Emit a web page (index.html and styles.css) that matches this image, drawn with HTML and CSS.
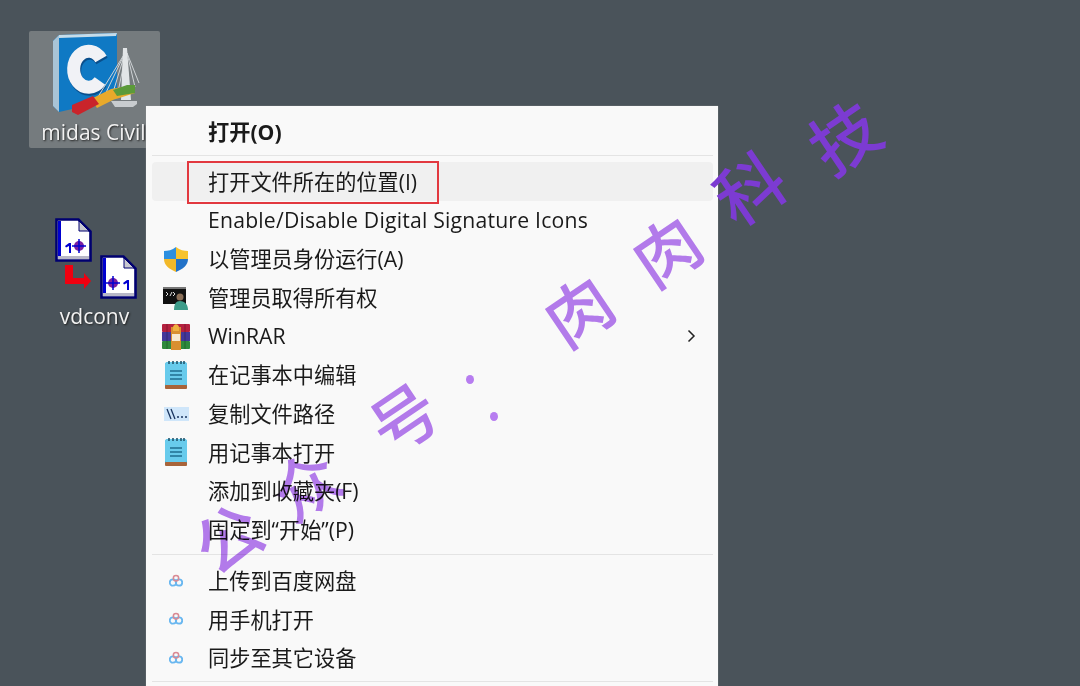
FILE: index.html
```html
<html lang="zh-CN">
  <head>
    <meta charset="UTF-8" />
    <title>Desktop menu</title>
    <link rel="stylesheet" href="styles.css">
  </head>
  <body>
    <svg class="defs" width="0" height="0">
      <symbol id="notepad" viewBox="0 0 24 30">
        <rect x="1" y="2" width="22" height="27" rx="3" fill="#2fa9d8"/>
        <rect x="1" y="2" width="22" height="24" rx="3" fill="#68cbec"/>
        <rect x="1" y="25" width="22" height="4" rx="1" fill="#a8643a"/>
        <path d="M5 1v3M9 1v3M13 1v3M17 1v3M20 1v3" stroke="#22566e" stroke-width="1.6"/>
        <path d="M6 11h12M6 15h12M6 19h12" stroke="#1f6f90" stroke-width="1.6"/>
      </symbol>
      <symbol id="cloud" viewBox="0 0 14 14">
        <circle cx="4" cy="8.500" r="3.200" fill="none" stroke="#69b7f0" stroke-width="1.800"/>
        <circle cx="10" cy="8.500" r="3.200" fill="none" stroke="#69b7f0" stroke-width="1.800"/>
        <circle cx="7" cy="4.200" r="2.700" fill="none" stroke="#d98a94" stroke-width="1.500"/>
      </symbol>
      <symbol id="doc" viewBox="0 0 37 44">
        <path d="M1.500 1.500h22l12 12v29H1.500z" fill="#fff" stroke="#000070" stroke-width="2.600"/>
        <path d="M3 3v37h3V3z" fill="#0000d0"/>
        <path d="M24 3v10h10z" fill="#c8c8d0" stroke="#000070"/>
        <rect x="3" y="38" width="31" height="3" fill="#b8b8c8"/>
      </symbol>
    </svg>

    <div class="desktop">
      <div class="desk-item desk-item-selected">
        <svg class="civil-icon" width="90" height="84" viewBox="0 0 90 84">
          <path d="M2 8 8 2 66 0V66L8 79 2 73z" fill="#0f79c4"/>
          <path d="M2 8 8 2 8 79 2 73z" fill="#a9c4d6"/>
          <path d="M8 2 66 0 65 3 8 5z" fill="#c5dcea"/>
          <path d="M51 28 A15 18 0 1 0 50 50" fill="none" stroke="#0a4f8c" stroke-width="13"/>
          <path d="M50 26 A15 18 0 1 0 49 48" fill="none" stroke="#f1f2f6" stroke-width="13"/>
          <path d="M74 20 42 72M74 20 50 70M74 20 60 66M75 20 66 64M76 20 88 50M76 20 84 54" stroke="#cfd3d6" stroke-width="1" fill="none"/>
          <path d="M72 15h4l4 52h-10z" fill="#e2e5e7"/>
          <path d="M60 68h26v3l-4 3H64z" fill="#c8cccf"/>
          <path d="M40 66 60 56 84 52 84 60 62 67 46 75z" fill="#e8a92a"/>
          <path d="M62 57 76 52 84 52 84 60 66 63z" fill="#5c9a3a"/>
          <path d="M21 72 42 63 48 71 27 82 21 79z" fill="#c9242b"/>
        </svg>
        <span class="desk-label">midas Civil</span>
      </div>

      <div class="desk-item desk-item-vd">
        <svg class="vd-icon" width="86" height="82" viewBox="0 0 86 82">
          <use href="#doc" x="1" y="0" width="37" height="44"/>
          <circle cx="25" cy="28" r="5" fill="#7a1fa0"/>
          <path d="M25 21v14M18 28h14" stroke="#0000d0" stroke-width="1.500"/>
          <path d="M11 28l4-3h2v10h-2V28l-3 1.500z" fill="#0000d0"/>
          <use href="#doc" x="46" y="37" width="37" height="44"/>
          <circle cx="59" cy="65" r="5" fill="#7a1fa0"/>
          <path d="M59 58v14M52 65h14" stroke="#0000d0" stroke-width="1.500"/>
          <path d="M69 65l4-3h2v10h-2V65l-3 1.500z" fill="#0000d0"/>
          <path d="M11 47h8v13h11v-5l7 8-7 8v-5H11z" fill="#f00010"/>
        </svg>
        <span class="desk-label">vdconv</span>
      </div>

      <div class="menu">
        <div class="row row-bold"><span class="slot"></span><span>打开(O)</span></div>
        <div class="sep"></div>

        <div class="row row-active">
          <span class="slot"></span><span>打开文件所在的位置(I)</span>
          <div class="mark"></div>
        </div>
        <div class="row"><span class="slot"></span><span class="label-latin">Enable/Disable Digital Signature Icons</span></div>
        <div class="row">
          <span class="slot">
            <svg width="26" height="26" viewBox="0 0 26 26">
              <path d="M13 1C9 4 5 5 1 5V13H13z" fill="#2d8fe0"/>
              <path d="M13 1C17 4 21 5 25 5V13H13z" fill="#f7c32e"/>
              <path d="M1 13C1 19 6 23 13 26V13z" fill="#f2b92a"/>
              <path d="M25 13C25 19 20 23 13 26V13z" fill="#2272c8"/>
            </svg>
          </span>
          <span>以管理员身份运行(A)</span>
        </div>
        <div class="row">
          <span class="slot">
            <svg width="26" height="24" viewBox="0 0 26 24">
              <rect x="0" y="1" width="23" height="17" fill="#111"/>
              <rect x="0" y="1" width="23" height="2" fill="#777"/>
              <path d="M3 6 5 8 3 10M7 10l2-4M10 6l2 2-2 2" stroke="#ddd" fill="none"/>
              <circle cx="17" cy="11" r="3.500" fill="#8a6f58"/>
              <path d="M11 24c0-6 2-9 6-9s8 3 8 9z" fill="#3d9c8a"/>
            </svg>
          </span>
          <span>管理员取得所有权</span>
        </div>
        <div class="row">
          <span class="slot">
            <svg width="28" height="27" viewBox="0 0 28 27">
              <rect x="0" y="1" width="28" height="8" rx="1" fill="#b4213f"/>
              <rect x="0" y="9" width="28" height="9" fill="#43379a"/>
              <rect x="0" y="18" width="28" height="8" rx="1" fill="#2e8a3c"/>
              <rect x="9" y="4" width="10" height="23" fill="#d98f30"/>
              <path d="M11 5c0-5 6-5 6 0v3h-6z" fill="#f0b040"/>
              <rect x="10" y="11" width="8" height="7" fill="#f6e8d0"/>
              <path d="M5 1v25M23 1v25" stroke="#00000040"/>
            </svg>
          </span>
          <span>WinRAR</span>
          <svg class="chevron" width="9" height="14" viewBox="0 0 9 14">
            <path d="M1.500 1.500 7 7l-5.500 5.500" fill="none" stroke="#222" stroke-width="1.500"/>
          </svg>
        </div>
        <div class="row">
          <span class="slot"><svg width="24" height="30"><use href="#notepad"/></svg></span>
          <span>在记事本中编辑</span>
        </div>
        <div class="row">
          <span class="slot">
            <svg width="25" height="14" viewBox="0 0 25 14">
              <rect x="0" y="0" width="25" height="14" fill="#cfe6fa"/>
              <path d="M3 2 7 12M7 2l4 10" stroke="#1a3560" stroke-width="1.300"/>
              <path d="M13 10h2M17 10h2M21 10h2" stroke="#1a3560" stroke-width="1.500"/>
            </svg>
          </span>
          <span>复制文件路径</span>
        </div>
        <div class="row">
          <span class="slot"><svg width="24" height="30"><use href="#notepad"/></svg></span>
          <span>用记事本打开</span>
        </div>
        <div class="row"><span class="slot"></span><span>添加到收藏夹(F)</span></div>
        <div class="row"><span class="slot"></span><span>固定到“开始”(P)</span></div>
        <div class="sep sep-wide"></div>

        <div class="row">
          <span class="slot"><svg width="14" height="14"><use href="#cloud"/></svg></span>
          <span>上传到百度网盘</span>
        </div>
        <div class="row">
          <span class="slot"><svg width="14" height="14"><use href="#cloud"/></svg></span>
          <span>用手机打开</span>
        </div>
        <div class="row">
          <span class="slot"><svg width="14" height="14"><use href="#cloud"/></svg></span>
          <span>同步至其它设备</span>
        </div>
        <div class="sep"></div>
      </div>

      <!-- handwritten watermark, laid over everything -->
      <div class="wm">
        <span class="wm-ch wm-1">公</span>
        <span class="wm-ch wm-2">众</span>
        <span class="wm-ch wm-3">号</span>
        <span class="wm-dot wm-dot-1"></span>
        <span class="wm-dot wm-dot-2"></span>
        <span class="wm-ch wm-4">肉</span>
        <span class="wm-ch wm-5">肉</span>
        <span class="wm-ch wm-6 wm-dark">科</span>
        <span class="wm-ch wm-7 wm-dark">技</span>
      </div>
    </div>
  </body>
</html>
```

FILE: styles.css
```css
html,
body {
  margin: 0;
  padding: 0;
}

.defs {
  position: absolute;
}

.desktop {
  position: relative;
  width: 1080px;
  height: 686px;
  overflow: hidden;
  background-color: #4a535a;
  font-family: "Open Sans", "Noto Sans CJK SC", sans-serif;
}

/* desktop icons sit on a free canvas */
.desk-item {
  position: absolute;
  display: flex;
  flex-direction: column;
  align-items: center;
  width: 131px;
}

.desk-item-selected {
  left: 29px;
  top: 31px;
  height: 117px;
  background-color: #757b7e;
  border-radius: 2px;
}

.civil-icon {
  margin-top: 2px;
  margin-left: 3px;
}

.desk-item-vd {
  left: 29px;
  top: 218px;
}

.desk-label {
  font-size: 21px;
  line-height: 28px;
  color: #f2f2f2;
  text-shadow: 1px 1px 2px #222;
  white-space: nowrap;
}

.desk-item-selected .desk-label {
  margin-top: 1px;
  margin-right: 2px;
}

.desk-item-vd .desk-label {
  margin-top: 2px;
}

.vd-icon {
  margin-left: 4px;
}

/* context menu */
.menu {
  position: absolute;
  left: 146px;
  top: 106px;
  width: 572px;
  height: 580px;
  box-sizing: border-box;
  padding: 6.4px 5px 0 6px;
  background-color: #f9f9f9;
  box-shadow: 0 0 1px #999;
  color: #1a1a1a;
  font-size: 21.2px;
}

.row {
  position: relative;
  display: flex;
  align-items: center;
  height: 38.67px;
  border-radius: 4px;
  white-space: nowrap;
}

.row span + span {
  margin-bottom: 2px;
}

.row-bold {
  font-weight: 700;
}

.row-bold span + span {
  margin-bottom: 3px;
}

.row-active {
  background-color: #f0f0f0;
}

.label-latin {
  letter-spacing: 0.2px;
}

.slot {
  display: flex;
  align-items: center;
  justify-content: center;
  flex: none;
  width: 48px;
  margin-right: 8px;
}

.sep {
  height: 11.3px;
  box-sizing: border-box;
  padding-top: 4px;
}

.sep::before {
  content: "";
  display: block;
  height: 1px;
  background-color: #e4e4e4;
}

.sep-wide {
  height: 12.3px;
  padding-top: 5px;
}

.mark {
  position: absolute;
  left: 35px;
  top: -1.500px;
  width: 252px;
  height: 43px;
  box-sizing: border-box;
  border: 2px solid #e2383f;
}

.chevron {
  position: absolute;
  right: 17px;
  top: 12px;
}

/* watermark */
.wm {
  position: absolute;
  left: 0;
  top: 0;
  width: 100%;
  height: 100%;
  pointer-events: none;
  font-family: "Noto Sans CJK SC", sans-serif;
}

.wm-ch {
  position: absolute;
  width: 80px;
  text-align: center;
  line-height: 80px;
  font-size: 66px;
  font-weight: 500;
  color: #b77df0;
  mix-blend-mode: multiply;
  transform: rotate(-34deg);
}

.wm-dark {
  color: #7c3bd2;
  font-size: 68px;
  mix-blend-mode: normal;
}

.wm-dot {
  position: absolute;
  width: 8px;
  height: 9px;
  border-radius: 50%;
  background-color: #b77df0;
}

.wm-dot-1 {
  left: 466px;
  top: 375px;
}

.wm-dot-2 {
  left: 490px;
  top: 412px;
}

.wm-1 {
  left: 186px;
  top: 495px;
}

.wm-2 {
  left: 264px;
  top: 442px;
}

.wm-3 {
  left: 362px;
  top: 375px;
}

.wm-4 {
  left: 537px;
  top: 268px;
}

.wm-5 {
  left: 625px;
  top: 208px;
}

.wm-6 {
  left: 708px;
  top: 146px;
}

.wm-7 {
  left: 803px;
  top: 95px;
}
```
